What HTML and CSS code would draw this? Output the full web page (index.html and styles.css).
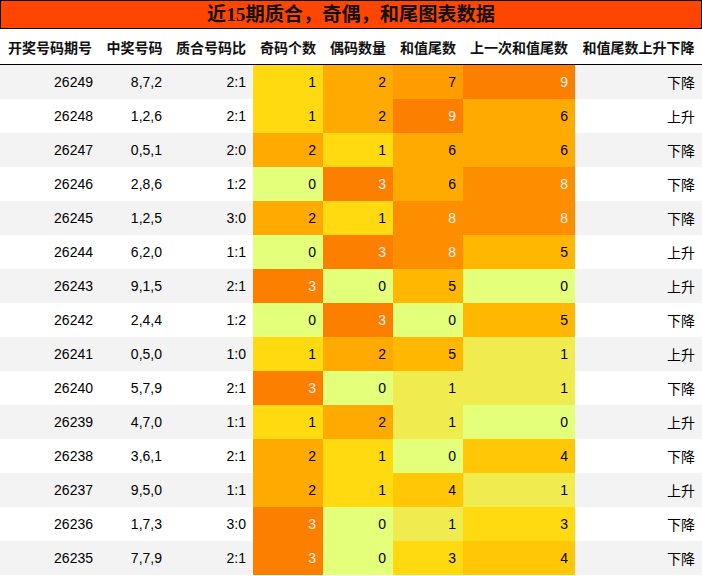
FILE: index.html
```html
<!DOCTYPE html>
<html lang="zh">
<head>
<meta charset="utf-8">
<title>近15期质合，奇偶，和尾图表数据</title>
<link rel="stylesheet" href="styles.css">
</head>
<body>
<div class="title">近15期质合，奇偶，和尾图表数据</div>
<table class="grid">
<colgroup>
<col class="c1"><col class="c2"><col class="c3"><col class="c4"><col class="c5"><col class="c6"><col class="c7"><col class="c8">
</colgroup>
<thead>
<tr><th>开奖号码期号</th><th>中奖号码</th><th>质合号码比</th><th>奇码个数</th><th>偶码数量</th><th>和值尾数</th><th>上一次和值尾数</th><th>和值尾数上升下降</th></tr>
</thead>
<tbody>
<tr><td>26249</td><td>8,7,2</td><td>2:1</td><td class="q1">1</td><td class="q2">2</td><td class="d7">7</td><td class="d9">9</td><td>下降</td></tr>
<tr><td>26248</td><td>1,2,6</td><td>2:1</td><td class="q1">1</td><td class="q2">2</td><td class="d9">9</td><td class="d6">6</td><td>上升</td></tr>
<tr><td>26247</td><td>0,5,1</td><td>2:0</td><td class="q2">2</td><td class="q1">1</td><td class="d6">6</td><td class="d6">6</td><td>下降</td></tr>
<tr><td>26246</td><td>2,8,6</td><td>1:2</td><td class="q0">0</td><td class="q3">3</td><td class="d6">6</td><td class="d8">8</td><td>下降</td></tr>
<tr><td>26245</td><td>1,2,5</td><td>3:0</td><td class="q2">2</td><td class="q1">1</td><td class="d8">8</td><td class="d8">8</td><td>下降</td></tr>
<tr><td>26244</td><td>6,2,0</td><td>1:1</td><td class="q0">0</td><td class="q3">3</td><td class="d8">8</td><td class="d5">5</td><td>上升</td></tr>
<tr><td>26243</td><td>9,1,5</td><td>2:1</td><td class="q3">3</td><td class="q0">0</td><td class="d5">5</td><td class="d0">0</td><td>上升</td></tr>
<tr><td>26242</td><td>2,4,4</td><td>1:2</td><td class="q0">0</td><td class="q3">3</td><td class="d0">0</td><td class="d5">5</td><td>下降</td></tr>
<tr><td>26241</td><td>0,5,0</td><td>1:0</td><td class="q1">1</td><td class="q2">2</td><td class="d5">5</td><td class="d1">1</td><td>上升</td></tr>
<tr><td>26240</td><td>5,7,9</td><td>2:1</td><td class="q3">3</td><td class="q0">0</td><td class="d1">1</td><td class="d1">1</td><td>下降</td></tr>
<tr><td>26239</td><td>4,7,0</td><td>1:1</td><td class="q1">1</td><td class="q2">2</td><td class="d1">1</td><td class="d0">0</td><td>上升</td></tr>
<tr><td>26238</td><td>3,6,1</td><td>2:1</td><td class="q2">2</td><td class="q1">1</td><td class="d0">0</td><td class="d4">4</td><td>下降</td></tr>
<tr><td>26237</td><td>9,5,0</td><td>1:1</td><td class="q2">2</td><td class="q1">1</td><td class="d4">4</td><td class="d1">1</td><td>上升</td></tr>
<tr><td>26236</td><td>1,7,3</td><td>3:0</td><td class="q3">3</td><td class="q0">0</td><td class="d1">1</td><td class="d3">3</td><td>下降</td></tr>
<tr><td>26235</td><td>7,7,9</td><td>2:1</td><td class="q3">3</td><td class="q0">0</td><td class="d3">3</td><td class="d4">4</td><td>下降</td></tr>
</tbody>
</table>
</body>
</html>
```
FILE: styles.css
```css
html, body {
  margin: 0;
  padding: 0;
  background: #ffffff;
}
body {
  width: 702px;
  font-family: "Liberation Sans", Arial, "Noto Sans CJK SC", sans-serif;
  font-size: 14px;
  color: #000;
}
.title {
  box-sizing: border-box;
  height: 29px;
  border: 1px solid #000;
  background: #ff4500;
  text-align: center;
  font-family: "Liberation Serif", "Noto Sans CJK SC", serif;
  font-weight: bold;
  font-size: 19.2px;
  line-height: 27px;
  color: #111;
}
.grid {
  width: 702px;
  border-collapse: collapse;
  table-layout: fixed;
}
.c1 { width: 100px; }
.c2 { width: 69px; }
.c3 { width: 84px; }
.c4 { width: 70px; }
.c5 { width: 70px; }
.c6 { width: 70px; }
.c7 { width: 112px; }
.c8 { width: 127px; }
.grid th {
  height: 35px;
  padding: 0;
  font-weight: bold;
  font-size: 14px;
  text-align: center;
  white-space: nowrap;
  border-bottom: 1px solid #000;
  color: #111;
}
.grid td {
  height: 34px;
  padding: 0 7px;
  text-align: right;
  white-space: nowrap;
  color: #000;
}
.grid tbody tr:nth-child(odd) { background: #f3f3f3; }
.grid tbody tr:nth-child(even) { background: #ffffff; }

.grid td.q0 { background: #e4ff7a; }
.grid td.q1 { background: #ffda11; }
.grid td.q2 { background: #ffaa00; }
.grid td.q3 { background: #fc7f00; color: #f1f1f1; }

.grid td.d0 { background: #e4ff7a; }
.grid td.d1 { background: #f0eb4f; }
.grid td.d3 { background: #ffda11; }
.grid td.d4 { background: #ffc706; }
.grid td.d5 { background: #ffb700; }
.grid td.d6 { background: #ffaa00; }
.grid td.d7 { background: #ff9c00; }
.grid td.d8 { background: #fd8e00; color: #f1f1f1; }
.grid td.d9 { background: #fc7f00; color: #f1f1f1; }
```
